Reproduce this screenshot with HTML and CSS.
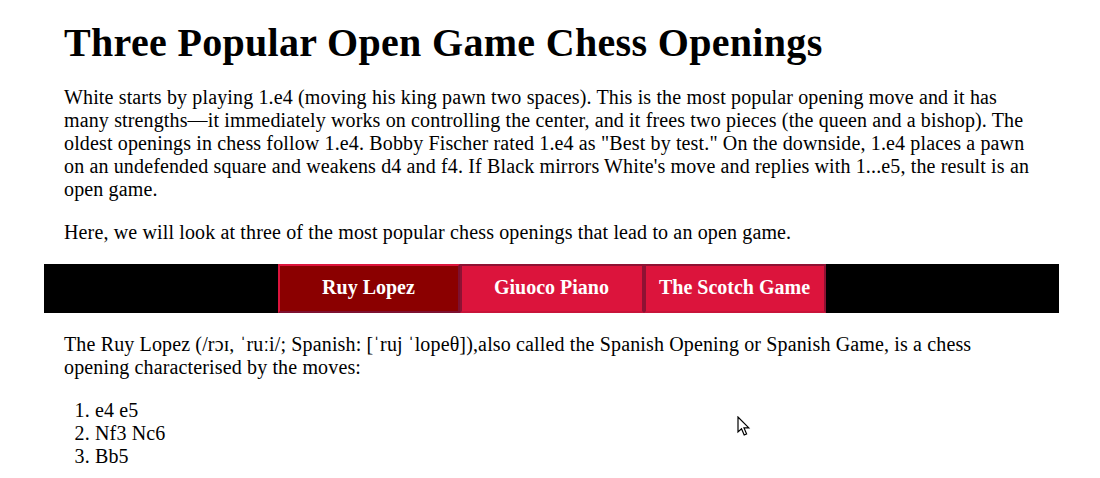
FILE: index.html
```html
<!DOCTYPE html>
<html lang="en">
<head>
<meta charset="utf-8">
<title>Three Popular Open Game Chess Openings</title>
<link rel="stylesheet" href="styles.css">
</head>
<body>
<div class="page">
  <div class="text">
    <h1 class="title">Three Popular Open Game Chess Openings</h1>
    <p class="para">White starts by playing 1.e4 (moving his king pawn two spaces). This is the most popular opening move and it has many strengths—it immediately works on controlling the center, and it frees two pieces (the queen and a bishop). The oldest openings in chess follow 1.e4. Bobby Fischer rated 1.e4 as "Best by test." On the downside, 1.e4 places a pawn on an undefended square and weakens d4 and f4. If Black mirrors White's move and replies with 1...e5, the result is an open game.</p>
    <p class="para">Here, we will look at three of the most popular chess openings that lead to an open game.</p>
  </div>
  <nav class="tabbar">
    <button class="tab active">Ruy Lopez</button>
    <button class="tab wide">Giuoco Piano</button>
    <button class="tab">The Scotch Game</button>
  </nav>
  <div class="text">
    <p class="para">The Ruy Lopez (/rɔɪ, ˈruːi/; Spanish: [ˈruj ˈlopeθ]),also called the Spanish Opening or Spanish Game, is a chess opening characterised by the moves:</p>
    <ol class="moves">
      <li>e4 e5</li>
      <li>Nf3 Nc6</li>
      <li>Bb5</li>
    </ol>
  </div>
</div>
<svg class="cursor" width="14" height="21" viewBox="0 0 14 21" aria-hidden="true">
  <path d="M1 1 L1 16 L4.5 12.8 L7.2 19 L9.6 18 L7 11.9 L11.8 11.9 Z" fill="#fff" stroke="#000" stroke-width="1.2" stroke-linejoin="miter"/>
</svg>
</body>
</html>
```

FILE: styles.css
```css
html, body {
  margin: 0;
  padding: 0;
  background: #fff;
}

body {
  font-family: "Liberation Serif", "Times New Roman", "DejaVu Serif", serif;
  font-size: 20px;
  color: #000;
}

.page {
  padding: 19px 41px 0 44px;
}

.text {
  padding: 0 20px;
  letter-spacing: 0.14px;
}

.title {
  font-size: 40px;
  font-weight: bold;
  margin: 0 0 20px;
  line-height: normal;
  letter-spacing: 0.32px;
}

.para {
  margin: 20px 0;
}

.tabbar {
  background: #000;
  display: flex;
  justify-content: center;
}

.tab {
  font-family: "Liberation Serif", "Times New Roman", serif;
  font-size: 20px;
  font-weight: bold;
  color: #fff;
  background: #dc143c;
  width: 182px;
  padding: 10px 0 12px;
  margin: 0;
  line-height: 23px;
  border-width: 2px;
  border-style: solid;
  border-color: #8e1233 #8e1233 #c8143a #8e1233;
  box-sizing: border-box;
  text-align: center;
  cursor: pointer;
}

.tab.wide {
  width: 184px;
}

.tab.active {
  background: #8b0000;
  border-color: #dc143c #7d1030 #7d1030 #dc143c;
}

.moves {
  margin: 20px 0;
  padding-left: 31px;
}

.cursor {
  position: absolute;
  left: 737px;
  top: 416px;
}
```
